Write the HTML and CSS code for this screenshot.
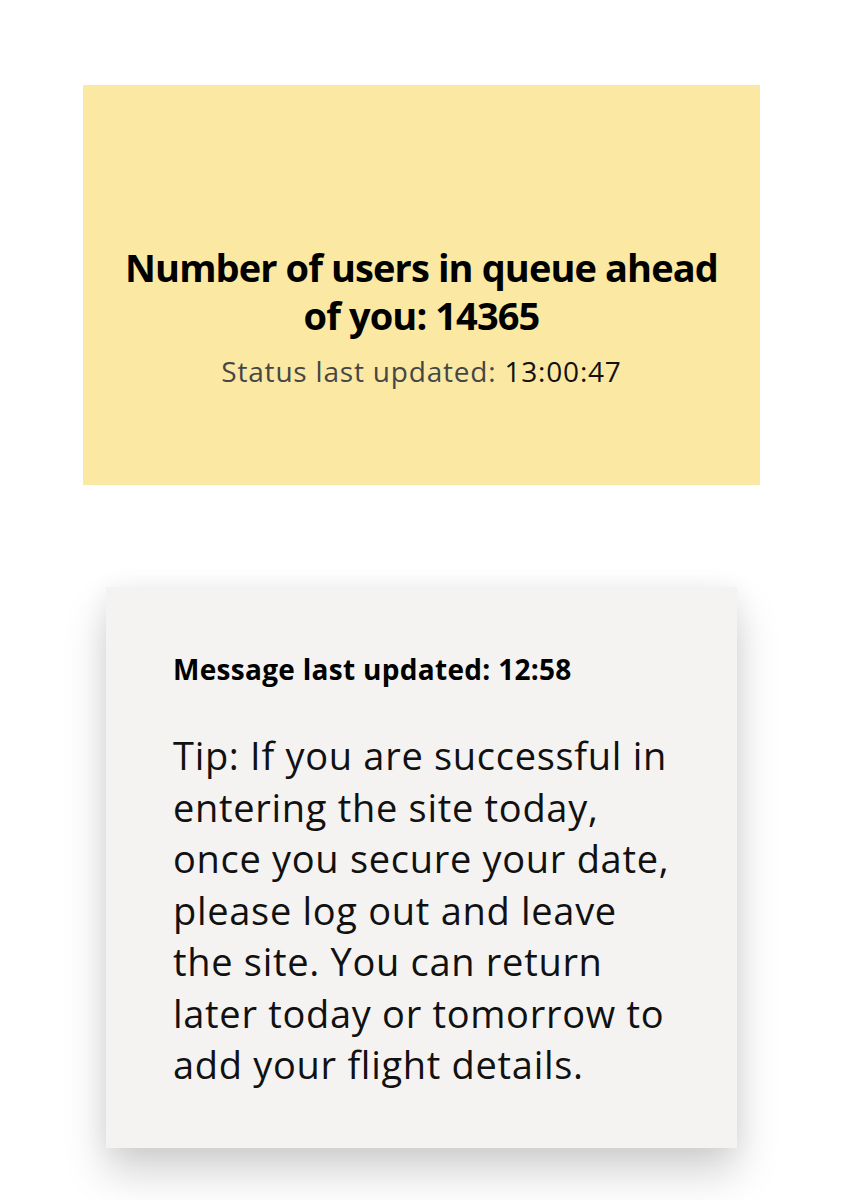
FILE: index.html
```html
<!DOCTYPE html>
<html>
<head>
  <meta charset="utf-8">
  <link rel="stylesheet" href="styles.css">
</head>
<body>
  <div class="queue-status">
    <h1 class="queue-count">Number of users in queue ahead of you: 14365</h1>
    <p class="queue-updated">Status last updated: <span class="queue-time">13:00:47</span></p>
  </div>

  <div class="message-card">
    <h2 class="message-updated">Message last updated: 12:58</h2>
    <p class="message-text">Tip: If you are successful in entering the site today, once you secure your date, please log out and leave the site. You can return later today or tomorrow to add your flight details.</p>
  </div>
</body>
</html>
```

FILE: styles.css
```css
body {
  margin: 0;
  padding: 85px 83px 53px;
  font-family: 'Open Sans', 'Noto Sans', sans-serif;
  background: #ffffff;
  color: #111111;
}

.queue-status {
  height: 400px;
  box-sizing: border-box;
  padding: 158px 30px 0;
  background: #fae8a3;
  text-align: center;
}

.queue-count {
  margin: 0 auto;
  max-width: 615px;
  font-size: 38px;
  font-weight: 700;
  line-height: 48px;
  letter-spacing: -0.9px;
  color: #000000;
}

.queue-updated {
  margin: 14px 0 0;
  font-size: 28px;
  line-height: 36px;
  letter-spacing: 0.8px;
  color: #464646;
}

.queue-time {
  color: #111111;
}

.message-card {
  margin: 102px 23px 0;
  padding: 64px 62px 57px 67px;
  background: #f4f3f2;
  box-shadow: 0 24px 40px rgba(0, 0, 0, 0.18), 0 0 24px rgba(0, 0, 0, 0.05);
}

.message-updated {
  margin: 0;
  font-size: 28px;
  font-weight: 700;
  line-height: 36px;
  letter-spacing: 0.3px;
  color: #000000;
}

.message-text {
  margin: 43px 0 0;
  font-size: 38px;
  line-height: 51.5px;
  letter-spacing: 0.7px;
  color: #111111;
}
```
